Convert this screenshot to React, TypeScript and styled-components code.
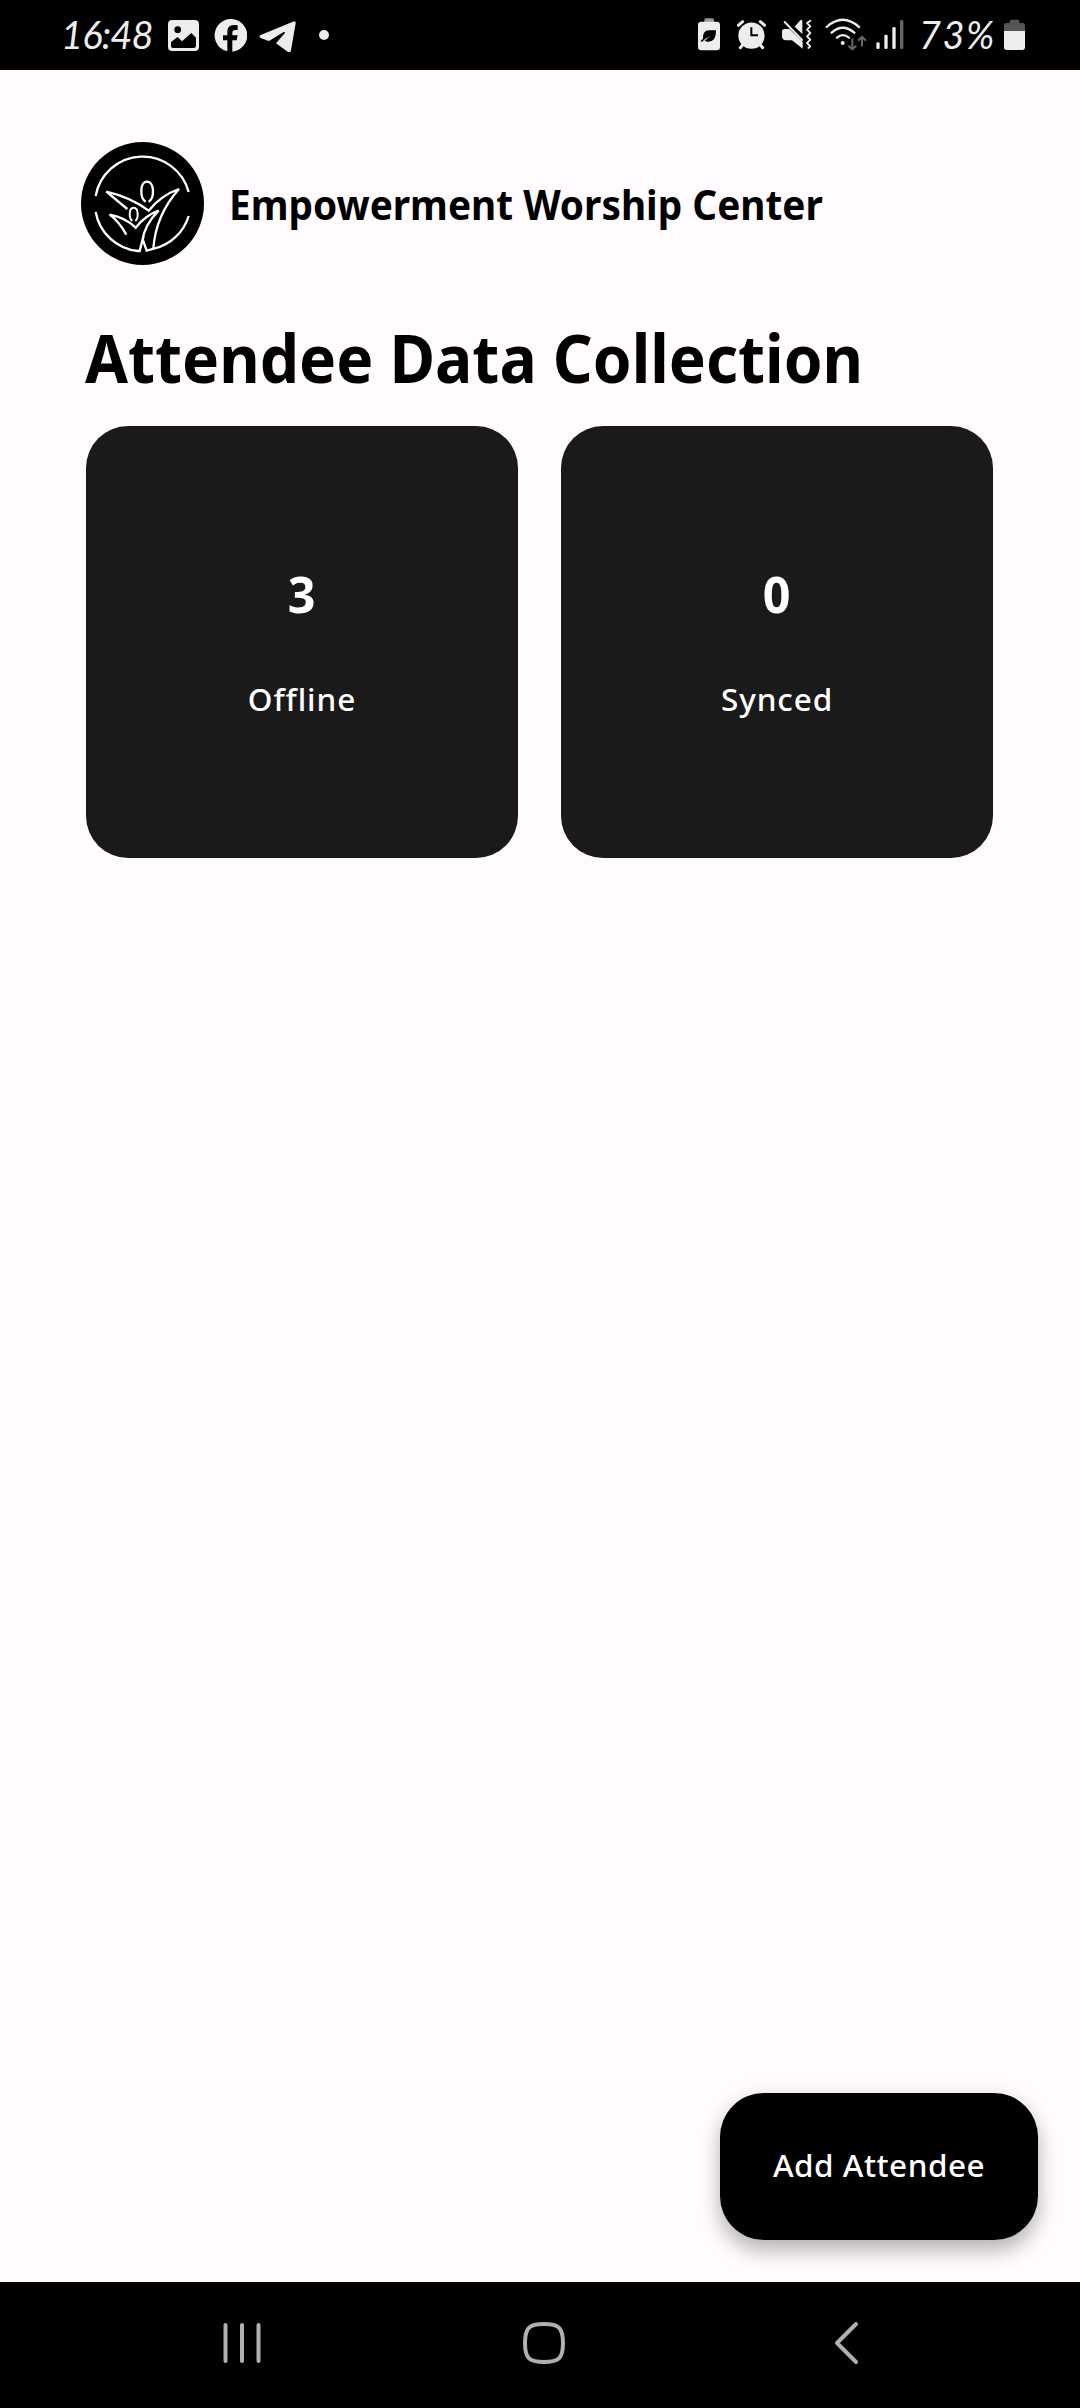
import React from 'react';
import styled, { createGlobalStyle } from 'styled-components';

const GlobalStyle = createGlobalStyle`
  *, *::before, *::after { box-sizing: border-box; }
  body { margin: 0; background: #fffbff; }
`;

const Screen = styled.div`
  width: 1080px;
  height: 2408px;
  display: flex;
  flex-direction: column;
  background: #fffbff;
  color: #000;
  font-family: 'Noto Sans', 'Open Sans', sans-serif;
  overflow: hidden;
`;

const StatusBar = styled.header`
  height: 70px;
  flex: none;
  display: flex;
  justify-content: space-between;
  padding: 18px 55px 0 61px;
  background: #000;
  color: #ededed;
`;

const StatusGroup = styled.div`
  display: flex;
  align-items: flex-start;
`;

const StatusText = styled.span<{ $width: number; $tracking: number; $before?: number }>`
  width: ${(p) => p.$width}px;
  margin-left: ${(p) => p.$before ?? 0}px;
  font-family: Lato, sans-serif;
  font-style: italic;
  font-size: 38px;
  line-height: 32px;
  letter-spacing: ${(p) => p.$tracking}px;
  white-space: nowrap;
`;

const Glyph = styled.svg<{ $before: number }>`
  display: block;
  flex: none;
  height: 35px;
  margin-left: ${(p) => p.$before}px;
  fill: #ededed;
`;

const Content = styled.main`
  flex: 1;
  display: flex;
  flex-direction: column;
  padding: 72px 42px 42px 86px;
`;

const Brand = styled.div`
  display: flex;
  align-items: center;
  gap: 25px;
  height: 123px;
  margin-left: -5px;
`;

const Logo = styled.svg`
  width: 123px;
  height: 123px;
  flex: none;
`;

const BrandName = styled.h2`
  margin: 0;
  font-size: 42px;
  font-weight: 700;
  line-height: 56px;
  white-space: nowrap;
  transform: scaleX(0.923);
  transform-origin: left;
`;

const Title = styled.h1`
  margin: 47px 0 0 -1px;
  height: 114px;
  font-size: 66px;
  font-weight: 700;
  line-height: 90px;
  white-space: nowrap;
  transform: scaleX(0.943);
  transform-origin: left;
`;

const Cards = styled.section`
  display: grid;
  grid-template-columns: 432px 432px;
  gap: 43px;
`;

const Card = styled.article`
  height: 432px;
  border-radius: 42px;
  background: #1a1a1a;
  color: #fff;
  display: flex;
  flex-direction: column;
  align-items: center;
  padding-top: 132px;
`;

const Count = styled.strong`
  font-size: 51px;
  line-height: 70px;
  font-weight: 700;
  transform: scaleX(0.95);
`;

const Label = styled.span`
  margin-top: 50px;
  font-size: 31.5px;
  line-height: 42px;
  font-weight: 500;
  letter-spacing: 0.9px;
`;

const AddButton = styled.button`
  align-self: flex-end;
  margin-top: auto;
  width: 318px;
  height: 147px;
  padding: 0 0 4px;
  border: 0;
  border-radius: 44px;
  background: #000;
  color: #fff;
  font-family: inherit;
  font-size: 31.5px;
  font-weight: 500;
  letter-spacing: 0.5px;
  box-shadow: 0 12px 20px rgba(0, 0, 0, 0.24), 0 2px 22px rgba(0, 0, 0, 0.08);
`;

const NavBar = styled.nav`
  height: 126px;
  flex: none;
  display: flex;
  align-items: flex-start;
  padding: 38px 0 0 221px;
  background: #000;
`;

const NavIcon = styled.svg<{ $before?: number }>`
  height: 46px;
  margin-left: ${(p) => p.$before ?? 0}px;
  fill: none;
  stroke: #b0b0b0;
  stroke-width: 4;
  stroke-linecap: round;
  stroke-linejoin: round;
`;

const stats = [
  { label: 'Offline', count: 3 },
  { label: 'Synced', count: 0 },
];

function StatusLeft() {
  return (
    <StatusGroup>
      <StatusText $width={92} $tracking={-0.8}>16:48</StatusText>
      <Glyph $before={15} width="31" viewBox="384 54 93 105">
        <path fillRule="evenodd" d="M397 60H464Q477 60 477 73V140Q477 153 464 153H397Q384 153 384 140V73Q384 60 397 60ZM413 79A10 10 0 1 0 413 99A10 10 0 1 0 413 79ZM393 126V137Q393 144 401 144H461Q468 144 468 137V113L454 99L426 124L413 111Z" />
      </Glyph>
      <Glyph $before={15} width="33" viewBox="522 54 99 105">
        <path d="M562 153V121H549V106H562V94Q562 76 581 75Q588 75 593 76V90H586Q577 90 577 98V106H593L590 121H577V155A49 49 0 1 0 562 154Z" />
      </Glyph>
      <Glyph $before={12} width="37" viewBox="657 54 111 105">
        <path d="M662 105L759 65Q768 61 767 70L753 151Q751 161 741 154L708 130L734 100Q737 95 731 96L691 121Q686 124 680 121L662 114Q655 110 662 105Z" />
      </Glyph>
      <Glyph $before={23} width="10" viewBox="837 54 30 105">
        <circle cx="852" cy="105" r="15" />
      </Glyph>
    </StatusGroup>
  );
}

function StatusRight() {
  return (
    <StatusGroup>
      <Glyph $before={0} width="22" viewBox="54 54 66 105">
        <rect x="73" y="55" width="29" height="14" rx="5" fill="#999" />
        <rect x="54" y="65" width="66" height="86" rx="10" />
        <path fill="#000" d="M69 117Q67 91 88 91H108Q109 126 84 125Q78 125 74 122Q82 116 91 108Q76 115 66 126L62 123Q64 118 69 117Z" />
      </Glyph>
      <Glyph $before={17} width="29" viewBox="171 54 87 105">
        <circle cx="214.500" cy="107" r="39.500" />
        <path stroke="#ededed" strokeWidth="9" strokeLinecap="round" d="M175 76L188 65M254 76L241 65M187 136L181 143M242 136L248 143" />
        <path fill="none" stroke="#000" strokeWidth="6" d="M214 82V106H234" />
      </Glyph>
      <Glyph $before={16} width="30" viewBox="306 54 90 105">
        <path d="M306 95Q306 87 314 87H328L368 126V146L336 121H319Q306 121 306 108ZM344 80L361 61Q367 56 367 65V102Z" />
        <path d="M314 66L366 120" fill="none" stroke="#ededed" strokeWidth="6" strokeLinecap="round" />
        <path d="M391 62L381 69L391 79L381 89L391 99L381 109L391 119L381 129L391 139L385 144" fill="none" stroke="#ededed" strokeWidth="5.500" strokeLinecap="round" strokeLinejoin="round" />
      </Glyph>
      <Glyph $before={13} width="42" viewBox="435 54 126 105">
        <g fill="none" stroke="#ededed" strokeWidth="7" strokeLinecap="round">
          <path d="M440 81Q488 38 537 81M455 98Q488 68 523 98M471 113Q488 98 507 113" />
        </g>
        <circle cx="488" cy="129" r="6" />
        <path d="M517 118V147M507 139L517 148L527 139M546 137V112M536 120L546 110L556 120" fill="none" stroke="#666" strokeWidth="6" strokeLinecap="round" strokeLinejoin="round" />
      </Glyph>
      <Glyph $before={9} width="28" viewBox="588 54 84 105">
        <rect x="589" y="127" width="10" height="20" rx="4" />
        <rect x="613" y="104" width="10" height="43" rx="4" />
        <rect x="637" y="81" width="10" height="66" rx="4" />
        <rect x="660" y="60" width="10" height="87" rx="4" fill="#666" />
      </Glyph>
      <StatusText $before={15} $width={78} $tracking={1.5}>73%</StatusText>
      <Glyph $before={7} width="21" viewBox="972 54 63 105">
        <path fill="#555" d="M972 93V77Q972 69 980 69H989V65Q989 59 995 59H1012Q1018 59 1018 65V69H1027Q1035 69 1035 77V93Z" />
        <path d="M972 93H1035V142Q1035 150 1027 150H980Q972 150 972 142Z" />
      </Glyph>
    </StatusGroup>
  );
}

function BrandLogo() {
  return (
    <Logo viewBox="33 36 369 369">
      <circle cx="217.500" cy="220.500" r="184.500" />
      <g fill="none" stroke="#fff" strokeWidth="7" strokeLinejoin="miter">
        <path d="M77 198A143 143 0 0 1 356 186" />
        <path d="M77 246A143 143 0 0 0 204 363H209L218 328L230 362L252 356A143 143 0 0 0 356 258" />
        <path d="M227 215C209 205 209 155 231 155C254 155 254 205 236 215" />
        <path d="M172 237L109 185C160 197 200 215 236 242C261 211 290 190 327 177C275 235 254 300 250 356" />
        <path strokeWidth="6" d="M187 273C176 264 176 233 191 233C206 233 206 264 196 273" />
        <path d="M169 314C157 292 142 271 119 254C151 260 177 273 197 293C215 270 238 252 266 242C236 272 220 302 218 333" />
      </g>
    </Logo>
  );
}

export default function App() {
  return (
    <>
      <GlobalStyle />
      <Screen>
        <StatusBar>
          <StatusLeft />
          <StatusRight />
        </StatusBar>
        <Content>
          <Brand>
            <BrandLogo />
            <BrandName>Empowerment Worship Center</BrandName>
          </Brand>
          <Title>Attendee Data Collection</Title>
          <Cards>
            {stats.map((s) => (
              <Card key={s.label}>
                <Count>{s.count}</Count>
                <Label>{s.label}</Label>
              </Card>
            ))}
          </Cards>
          <AddButton type="button">Add Attendee</AddButton>
        </Content>
        <NavBar>
          <NavIcon width="42" viewBox="0 0 42 46">
            <path d="M4.500 5V41M21 5V41M37.500 5V41" />
          </NavIcon>
          <NavIcon $before={258} width="46" viewBox="0 0 46 46">
            <path d="M23 4C38 4 42 8 42 23S38 42 23 42S4 38 4 23S8 4 23 4Z" />
          </NavIcon>
          <NavIcon $before={264} width="30" viewBox="0 0 30 46">
            <path d="M25 4L6 23L25 42" />
          </NavIcon>
        </NavBar>
      </Screen>
    </>
  );
}
